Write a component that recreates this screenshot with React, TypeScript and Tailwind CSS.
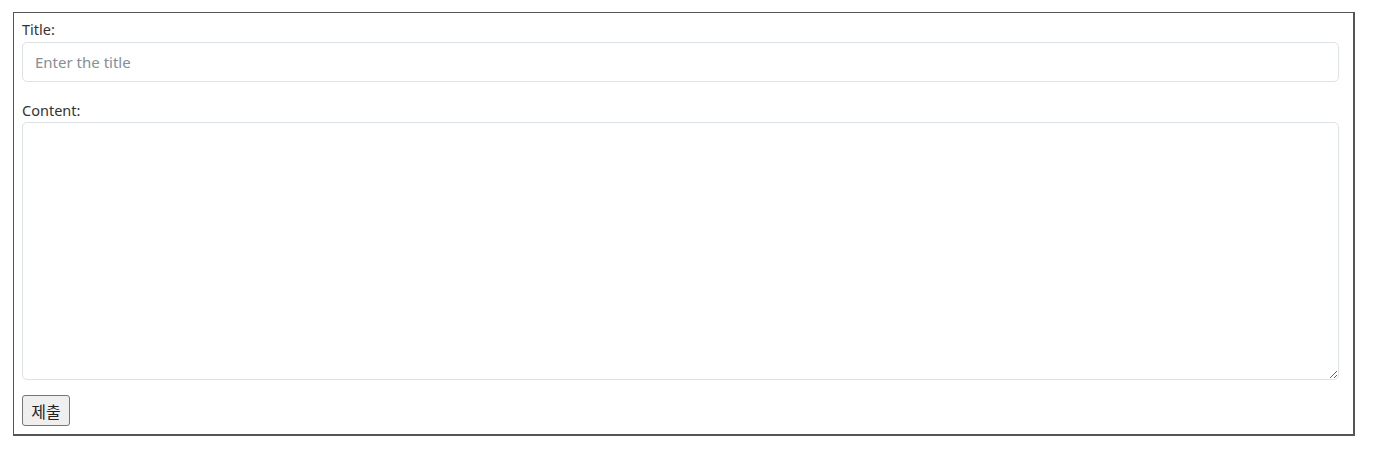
import React, { useState } from "react";

export default function App() {
  const [title, setTitle] = useState("");
  const [content, setContent] = useState("");

  return (
    <div className="bg-white w-[1377px] h-[452px] pt-[12px] pl-[13px] font-['Noto_Sans','Noto_Sans_CJK_KR',sans-serif] text-[#212529]">
      <form
        onSubmit={(e) => e.preventDefault()}
        className="w-[1342px] h-[424px] border border-[#555] border-r-2 border-b-2 pt-[6px] pl-[8px] pr-[14px] pb-[8px] flex flex-col"
      >
        <label className="block text-[14.5px] leading-[21px] text-[#333]">Title:</label>
        <input
          value={title}
          onChange={(e) => setTitle(e.target.value)}
          placeholder="Enter the title"
          className="mt-[2px] h-[40px] w-full rounded-[5px] border border-[#dee2e6] px-[12px] text-[15px] text-[#333] placeholder:text-[#868e96] outline-none"
        />
        <label className="block mt-[18px] text-[14.5px] leading-[21px] text-[#333]">Content:</label>
        <textarea
          value={content}
          onChange={(e) => setContent(e.target.value)}
          className="mt-[1px] h-[259px] w-full rounded-[5px] border border-[#dee2e6] px-[12px] py-[6px] text-[15px] outline-none resize-y"
        />
        <div className="mt-[15px]">
          <button
            type="submit"
            className="h-[31px] w-[48px] rounded-[3px] border border-[#767676] bg-[#efefef] text-[16px] text-[#222] font-['Noto_Sans_CJK_KR',sans-serif]"
          >
            제출
          </button>
        </div>
      </form>
    </div>
  );
}
